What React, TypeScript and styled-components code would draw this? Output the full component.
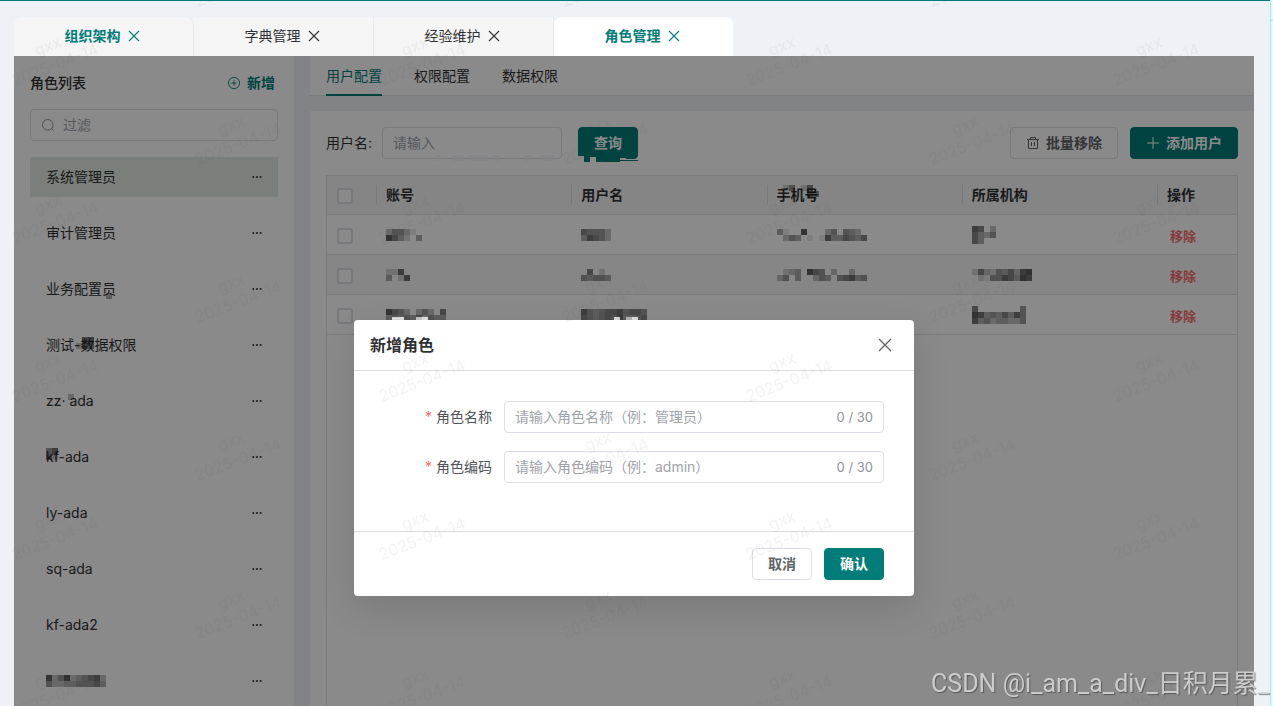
import React from 'react';
import styled, { createGlobalStyle, css } from 'styled-components';

const TEAL = '#007d79';
const SANS = `Inter, 'Noto Sans CJK SC', sans-serif`;

const GlobalStyle = createGlobalStyle`
  *, *::before, *::after { box-sizing: border-box; }
  body {
    margin: 0;
    font-family: ${SANS};
    font-size: 14px;
    line-height: 20px;
    color: #303133;
    background: #eef2f7;
    overflow: hidden;
  }
  button, input { font: inherit; color: inherit; }
  button { cursor: pointer; }
  svg { display: block; flex: none; }
`;

/* ---------- page frame ---------- */

const Frame = styled.div`
  display: grid;
  grid-template-columns: 1fr 3px;
  height: 100vh;
  overflow: hidden;
`;

const Shell = styled.div`
  display: flex;
  flex-direction: column;
  min-width: 0;
  padding: 16px 16px 0 14px;
  border-top: 1px solid ${TEAL};
  overflow: hidden;
`;

const EdgeStrip = styled.div`
  border-left: 1px solid #8df3fb;
  background: linear-gradient(#8df3fb, #8df3fb) 0 20px / 100% 1px no-repeat, #f3f6fa;
`;

const TabBar = styled.nav`
  display: flex;
  height: 39px;
  flex: none;
`;

const PageTab = styled.div<{ $active?: boolean; $tinted?: boolean }>`
  display: flex;
  align-items: center;
  justify-content: center;
  gap: 6px;
  width: 180px;
  padding-bottom: 2px;
  background: ${(p) => (p.$active ? '#fff' : '#f5f5f5')};
  border-right: 1px solid ${(p) => (p.$active ? '#f5f7fa' : '#e8eaee')};
  border-radius: ${(p) => (p.$tinted ? '8px 8px 0 0' : '0')};
  color: ${(p) => (p.$tinted ? TEAL : '#303133')};
  font-weight: ${(p) => (p.$tinted ? 700 : 400)};
`;

const TabLink = styled.a`
  color: inherit;
  text-decoration: none;
`;

const IconButton = styled.button`
  display: flex;
  align-items: center;
  justify-content: center;
  padding: 0;
  border: 0;
  background: none;
`;

const Workspace = styled.main`
  position: relative;
  display: flex;
  gap: 16px;
  flex: 1;
  min-height: 0;
`;

/* ---------- role list ---------- */

const Sidebar = styled.aside`
  width: 280px;
  flex: none;
  padding: 0 16px;
  background: #fff;
`;

const SidebarHead = styled.div`
  display: flex;
  align-items: center;
  justify-content: space-between;
  height: 53px;
  padding-right: 3px;
`;

const SidebarTitle = styled.h2`
  margin: 0;
  font-size: 14px;
  line-height: 20px;
  font-weight: 500;
`;

const TextButton = styled.button`
  display: flex;
  align-items: center;
  gap: 6px;
  padding: 0;
  border: 0;
  background: none;
  color: ${TEAL};
  font-weight: 700;
`;

const fieldBox = css`
  display: flex;
  align-items: center;
  height: 32px;
  padding: 0 10px;
  border: 1px solid #dcdfe6;
  border-radius: 4px;
  background: #fff;
`;

const Field = styled.div<{ $width?: number }>`
  ${fieldBox}
  gap: 8px;
  width: ${(p) => (p.$width ? `${p.$width}px` : 'auto')};
  flex: ${(p) => (p.$width ? 'none' : '1')};
  color: #909399;
`;

const TextInput = styled.input`
  flex: 1;
  min-width: 0;
  height: 30px;
  padding: 0 0 2px;
  border: 0;
  outline: 0;
  background: none;
  color: #303133;
  &::placeholder { color: #a0a3aa; opacity: 1; }
`;

const RoleList = styled.ul`
  display: flex;
  flex-direction: column;
  gap: 16px;
  margin: 16px 0 0;
  padding: 0;
  list-style: none;
`;

const RoleItem = styled.li<{ $selected?: boolean }>`
  display: flex;
  align-items: center;
  justify-content: space-between;
  height: 40px;
  padding: 0 16px;
  background: ${(p) => (p.$selected ? '#e1ebe4' : 'none')};
`;

const RoleName = styled.span`
  position: relative;
`;

const Smudge = styled.span<{ $x: number; $y: number }>`
  position: absolute;
  left: ${(p) => p.$x}px;
  top: ${(p) => p.$y}px;
`;

/* ---------- content ---------- */

const Content = styled.section`
  display: flex;
  flex-direction: column;
  gap: 15px;
  flex: 1;
  min-width: 0;
`;

const SubTabs = styled.nav`
  display: flex;
  gap: 32px;
  height: 40px;
  flex: none;
  padding: 0 16px;
  background: #fff;
  box-shadow: inset 0 -1px 0 #e2e4e9;
`;

const SubTab = styled.a<{ $active?: boolean }>`
  display: flex;
  align-items: center;
  border-top: 2px solid transparent;
  border-bottom: 2px solid ${(p) => (p.$active ? TEAL : 'transparent')};
  color: ${(p) => (p.$active ? TEAL : '#303133')};
  text-decoration: none;
`;

const Panel = styled.div`
  display: flex;
  flex-direction: column;
  gap: 16px;
  flex: 1;
  min-height: 0;
  padding: 16px 16px 0;
  background: #fff;
`;

const Toolbar = styled.form`
  position: relative;
  display: flex;
  align-items: center;
`;

const ToolbarLabel = styled.label`
  width: 56px;
`;

const Actions = styled.div`
  display: flex;
  gap: 12px;
  margin-left: auto;
`;

const Button = styled.button<{ $primary?: boolean }>`
  position: relative;
  display: flex;
  align-items: center;
  justify-content: center;
  gap: 6px;
  height: 32px;
  padding: 0 15px;
  border: 1px solid ${(p) => (p.$primary ? TEAL : '#dcdfe6')};
  border-radius: 4px;
  background: ${(p) => (p.$primary ? TEAL : '#fff')};
  color: ${(p) => (p.$primary ? '#fff' : '#606266')};
  font-weight: 700;
`;

const SearchSlot = styled.div`
  margin-left: 16px;
`;

const TableBox = styled.div`
  flex: 1;
  min-height: 0;
  overflow: hidden;
  border: 1px solid #e2e4e8;
  border-bottom: 0;
`;

const Table = styled.table`
  width: 100%;
  table-layout: fixed;
  border-collapse: separate;
  border-spacing: 0;
`;

const CheckCol = styled.col`
  width: 49px;
`;

const ActionCol = styled.col`
  width: 80px;
`;

const HeadCell = styled.th`
  position: relative;
  height: 39px;
  padding: 0 10px;
  border-bottom: 1px solid #e2e4e8;
  background: #f5f5f6;
  color: #303133;
  font-weight: 700;
  text-align: left;
  & + &::before {
    content: '';
    position: absolute;
    left: 0;
    top: 9px;
    height: 20px;
    border-left: 1px solid #dcdfe6;
  }
`;

const Row = styled.tr<{ $striped?: boolean }>`
  background: ${(p) => (p.$striped ? '#f8f8f9' : '#fff')};
`;

const Cell = styled.td`
  height: 40px;
  padding: 0 10px;
  border-bottom: 1px solid #e2e4e8;
`;

const CheckBox = styled.input`
  display: block;
  appearance: none;
  width: 16px;
  height: 16px;
  margin: 2px 0 0;
  border: 2px solid #dcdfe6;
  border-radius: 3px;
  background: #fff;
`;

const RemoveButton = styled.button`
  display: block;
  padding: 2px 3px 0;
  border: 0;
  background: none;
  color: #f56c6c;
  font-size: 13px;
  font-weight: 700;
`;

/* ---------- dialog ---------- */

const Mask = styled.div`
  position: absolute;
  inset: 0;
  display: flex;
  justify-content: center;
  align-items: flex-start;
  padding-top: 264px;
  background: rgba(0, 0, 0, 0.46);
`;

const Dialog = styled.div`
  position: relative;
  width: 560px;
  border-radius: 4px;
  background: #fff;
  box-shadow: 0 12px 36px rgba(0, 0, 0, 0.12);
`;

const DialogHead = styled.header`
  display: flex;
  align-items: center;
  justify-content: space-between;
  height: 51px;
  padding: 0 21px 0 16px;
  border-bottom: 1px solid #dcdde0;
  color: #606266;
`;

const DialogTitle = styled.h3`
  margin: 0;
  font-size: 16px;
  line-height: 24px;
  font-weight: 700;
  color: #303133;
`;

const DialogBody = styled.form`
  display: flex;
  flex-direction: column;
  gap: 18px;
  padding: 30px 30px 48px;
`;

const FormRow = styled.div`
  display: flex;
  align-items: center;
  gap: 12px;
`;

const FormLabel = styled.label`
  display: flex;
  justify-content: flex-end;
  gap: 4px;
  width: 108px;
  color: #505257;
`;

const Required = styled.span`
  color: #f56c6c;
`;

const Counter = styled.span`
  font-size: 13px;
  color: #909399;
`;

const DialogFoot = styled.footer`
  display: flex;
  justify-content: flex-end;
  gap: 12px;
  padding: 16px 30px;
  border-top: 1px solid #dcdde0;
`;

/* ---------- watermarks ---------- */

const MarkLayer = styled.svg`
  position: fixed;
  inset: 0;
  width: 100%;
  height: 100%;
  pointer-events: none;
  font-family: ${SANS};
  font-size: 16px;
  fill: rgba(90, 90, 90, 0.07);
`;

const Credit = styled.div`
  position: fixed;
  right: 4px;
  bottom: 4px;
  font-family: Roboto, 'Noto Sans CJK SC', sans-serif;
  font-size: 25px;
  line-height: 36px;
  font-weight: 400;
  color: rgba(214, 214, 214, 0.9);
  text-shadow: 1px 1px 1px rgba(60, 60, 60, 0.6);
  pointer-events: none;
`;

/* ---------- drawings ---------- */

const CrossIcon = () => (
  <svg width="16" height="16" fill="none" stroke="currentColor" strokeWidth="1.1" aria-hidden>
    <path d="M2 3L12 13M12 3L2 13" />
  </svg>
);

const DialogCrossIcon = () => (
  <svg width="16" height="16" fill="none" stroke="currentColor" strokeWidth="1.3" aria-hidden>
    <path d="M2 2L14 14M14 2L2 14" />
  </svg>
);

const PlusCircleIcon = () => (
  <svg width="14" height="14" fill="none" stroke="currentColor" strokeWidth="0.9" aria-hidden>
    <circle cx="7" cy="7" r="5.6" />
    <path d="M7 4.2v5.6M4.2 7h5.6" />
  </svg>
);

const SearchIcon = () => (
  <svg width="14" height="14" fill="none" stroke="currentColor" aria-hidden>
    <circle cx="6.8" cy="6.8" r="5.3" />
    <path d="M10.6 10.6L12.6 12.6" />
  </svg>
);

const TrashIcon = () => (
  <svg width="14" height="14" fill="none" stroke="currentColor" aria-hidden>
    <path d="M1 3.5h12M2.5 3.5v9h9v-9M4.5 3.5V1.5h5v2M5.5 6v4M8.5 6v4" />
  </svg>
);

const PlusIcon = () => (
  <svg width="14" height="14" fill="none" stroke="currentColor" aria-hidden>
    <path d="M7 1v12M1 7h12" />
  </svg>
);

const DotsIcon = () => (
  <svg width="10" height="4" fill="#303133" aria-hidden>
    <circle cx="1.4" cy="2" r="1" />
    <circle cx="5" cy="2" r="1" />
    <circle cx="8.6" cy="2" r="1" />
  </svg>
);

/** Pixelated block hiding a private value; each digit is the strength of one cell. */
const Mosaic = ({ rows, color = '#111' }: { rows: string; color?: string }) => {
  const lines = rows.split('/');
  return (
    <svg width={lines[0].length * 6} height={lines.length * 6} shapeRendering="crispEdges" aria-hidden>
      {lines.flatMap((line, y) =>
        [...line].map((ch, x) =>
          ch === '.' ? null : (
            <rect key={`${x}-${y}`} x={x * 6} y={y * 6} width="6" height="6" fill={color} fillOpacity={Number(ch) * 0.085} />
          ),
        ),
      )}
    </svg>
  );
};

/** Ragged lower edge of the query button. */
const ButtonEdge = () => (
  <svg width="60" height="6" shapeRendering="crispEdges" aria-hidden>
    <path d="M6 3h6v3H6zM18 3h24v3H18zM42 4h18v1H42z" fill={TEAL} />
    <path d="M0 0h6v6H0zM12 1h6v5h-6zM42 2h6v2h-6z" fill="#fff" />
  </svg>
);

/* ---------- data ---------- */

const pageTabs = [
  { name: '组织架构', tinted: true },
  { name: '字典管理' },
  { name: '经验维护' },
  { name: '角色管理', tinted: true, active: true },
];

type Role = { name?: string; hidden?: string; smudge?: { x: number; y: number; rows: string } };

const roles: Role[] = [
  { name: '系统管理员' },
  { name: '审计管理员' },
  { name: '业务配置员', smudge: { x: 60, y: 14, rows: '4' } },
  { name: '测试-数据权限', smudge: { x: 30, y: 2, rows: '.67/366' } },
  { name: 'zz· ada', smudge: { x: 22, y: 3, rows: '3' } },
  { name: 'kf-ada', smudge: { x: 0, y: 1, rows: '57/63' } },
  { name: 'ly-ada' },
  { name: 'sq-ada' },
  { name: 'kf-ada2' },
  { hidden: '8358345673/5334455564' },
];

const users = [
  { account: '355310/864204', name: '65553./47653.', phone: '41..8...35.543./.354.1.17446546', org: '76.3/6435/64..' },
  { account: '227.../4.27..', name: '.6.2./54554', phone: '.234.865.3..3../35.4..354.56745', org: '2632546378/.215576487' },
  { account: '8653.353.6/4545463544', name: '75456675665/65456574456', phone: '', org: '6.......5/874546475/745344335' },
];

const marks = Array.from({ length: 5 }, (_, r) => r).flatMap((r) =>
  Array.from({ length: 4 }, (_, c) => c).flatMap((c) => [
    { x: 57 + c * 367, y: 70 + r * 158 },
    { x: 240 + c * 367, y: -9 + r * 158 },
  ]),
);

export default function App() {
  return (
    <>
      <GlobalStyle />
      <Frame>
        <Shell>
          <TabBar>
            {pageTabs.map((t) => (
              <PageTab key={t.name} $active={t.active} $tinted={t.tinted}>
                <TabLink href="#">{t.name}</TabLink>
                <IconButton type="button" aria-label={`关闭${t.name}`}>
                  <CrossIcon />
                </IconButton>
              </PageTab>
            ))}
          </TabBar>

          <Workspace>
            <Sidebar>
              <SidebarHead>
                <SidebarTitle>角色列表</SidebarTitle>
                <TextButton type="button">
                  <PlusCircleIcon />
                  新增
                </TextButton>
              </SidebarHead>
              <Field>
                <SearchIcon />
                <TextInput aria-label="过滤" placeholder="过滤" />
              </Field>
              <RoleList>
                {roles.map((role, i) => (
                  <RoleItem key={i} $selected={i === 0}>
                    <RoleName>
                      {role.name}
                      {role.hidden && <Mosaic rows={role.hidden} />}
                      {role.smudge && (
                        <Smudge $x={role.smudge.x} $y={role.smudge.y}>
                          <Mosaic rows={role.smudge.rows} />
                        </Smudge>
                      )}
                    </RoleName>
                    <IconButton type="button" aria-label="更多">
                      <DotsIcon />
                    </IconButton>
                  </RoleItem>
                ))}
              </RoleList>
            </Sidebar>

            <Content>
              <SubTabs>
                <SubTab href="#" $active>用户配置</SubTab>
                <SubTab href="#">权限配置</SubTab>
                <SubTab href="#">数据权限</SubTab>
              </SubTabs>
              <Panel>
                <Toolbar>
                  <ToolbarLabel htmlFor="user-name">用户名:</ToolbarLabel>
                  <Field $width={180}>
                    <TextInput id="user-name" placeholder="请输入" />
                  </Field>
                  <SearchSlot>
                    <Button type="button" $primary>查询</Button>
                  </SearchSlot>
                  <Actions>
                    <Button type="button">
                      <TrashIcon />
                      批量移除
                    </Button>
                    <Button type="button" $primary>
                      <PlusIcon />
                      添加用户
                    </Button>
                  </Actions>
                  <Smudge $x={108} $y={28}>
                    <Mosaic rows="8..88.888.8....8..88" color="#f3f5f9" />
                  </Smudge>
                  <Smudge $x={252} $y={29}>
                    <ButtonEdge />
                  </Smudge>
                </Toolbar>
                <TableBox>
                  <Table>
                    <colgroup>
                      <CheckCol />
                      <col />
                      <col />
                      <col />
                      <col />
                      <ActionCol />
                    </colgroup>
                    <thead>
                      <tr>
                        <HeadCell><CheckBox type="checkbox" aria-label="全选" /></HeadCell>
                        <HeadCell>账号</HeadCell>
                        <HeadCell>用户名</HeadCell>
                        <HeadCell>
                          手机号
                          <Smudge $x={16} $y={9}>
                            <Mosaic rows="25.26./....65" />
                          </Smudge>
                        </HeadCell>
                        <HeadCell>所属机构</HeadCell>
                        <HeadCell>操作</HeadCell>
                      </tr>
                    </thead>
                    <tbody>
                      {users.map((u, i) => (
                        <Row key={i} $striped={i === 1}>
                          <Cell><CheckBox type="checkbox" aria-label={`选择第${i + 1}行`} /></Cell>
                          <Cell><Mosaic rows={u.account} /></Cell>
                          <Cell><Mosaic rows={u.name} /></Cell>
                          <Cell>{u.phone && <Mosaic rows={u.phone} />}</Cell>
                          <Cell><Mosaic rows={u.org} /></Cell>
                          <Cell><RemoveButton type="button">移除</RemoveButton></Cell>
                        </Row>
                      ))}
                    </tbody>
                  </Table>
                </TableBox>
              </Panel>
            </Content>

            <Mask>
              <Dialog role="dialog" aria-labelledby="dialog-title">
                <DialogHead>
                  <DialogTitle id="dialog-title">新增角色</DialogTitle>
                  <IconButton type="button" aria-label="关闭">
                    <DialogCrossIcon />
                  </IconButton>
                </DialogHead>
                <DialogBody>
                  <FormRow>
                    <FormLabel htmlFor="role-name"><Required>*</Required>角色名称</FormLabel>
                    <Field>
                      <TextInput id="role-name" placeholder="请输入角色名称（例：管理员）" />
                      <Counter>0 / 30</Counter>
                    </Field>
                  </FormRow>
                  <FormRow>
                    <FormLabel htmlFor="role-code"><Required>*</Required>角色编码</FormLabel>
                    <Field>
                      <TextInput id="role-code" placeholder="请输入角色编码（例：admin）" />
                      <Counter>0 / 30</Counter>
                    </Field>
                  </FormRow>
                </DialogBody>
                <DialogFoot>
                  <Button type="button">取消</Button>
                  <Button type="button" $primary>确认</Button>
                </DialogFoot>
                <Smudge $x={38} $y={-3}>
                  <Mosaic rows="99..89" color="#fff" />
                </Smudge>
                <Smudge $x={260} $y={-3}>
                  <Mosaic rows="9.69" color="#fff" />
                </Smudge>
              </Dialog>
            </Mask>
          </Workspace>
        </Shell>
        <EdgeStrip />
      </Frame>

      <MarkLayer aria-hidden>
        {marks.map((m) => (
          <g key={`${m.x}-${m.y}`} transform={`translate(${m.x} ${m.y}) rotate(-21)`} textAnchor="middle">
            <text y="-20">gxx</text>
            <text>2025-04-14</text>
          </g>
        ))}
      </MarkLayer>
      <Credit>CSDN @i_am_a_div_日积月累_</Credit>
    </>
  );
}
